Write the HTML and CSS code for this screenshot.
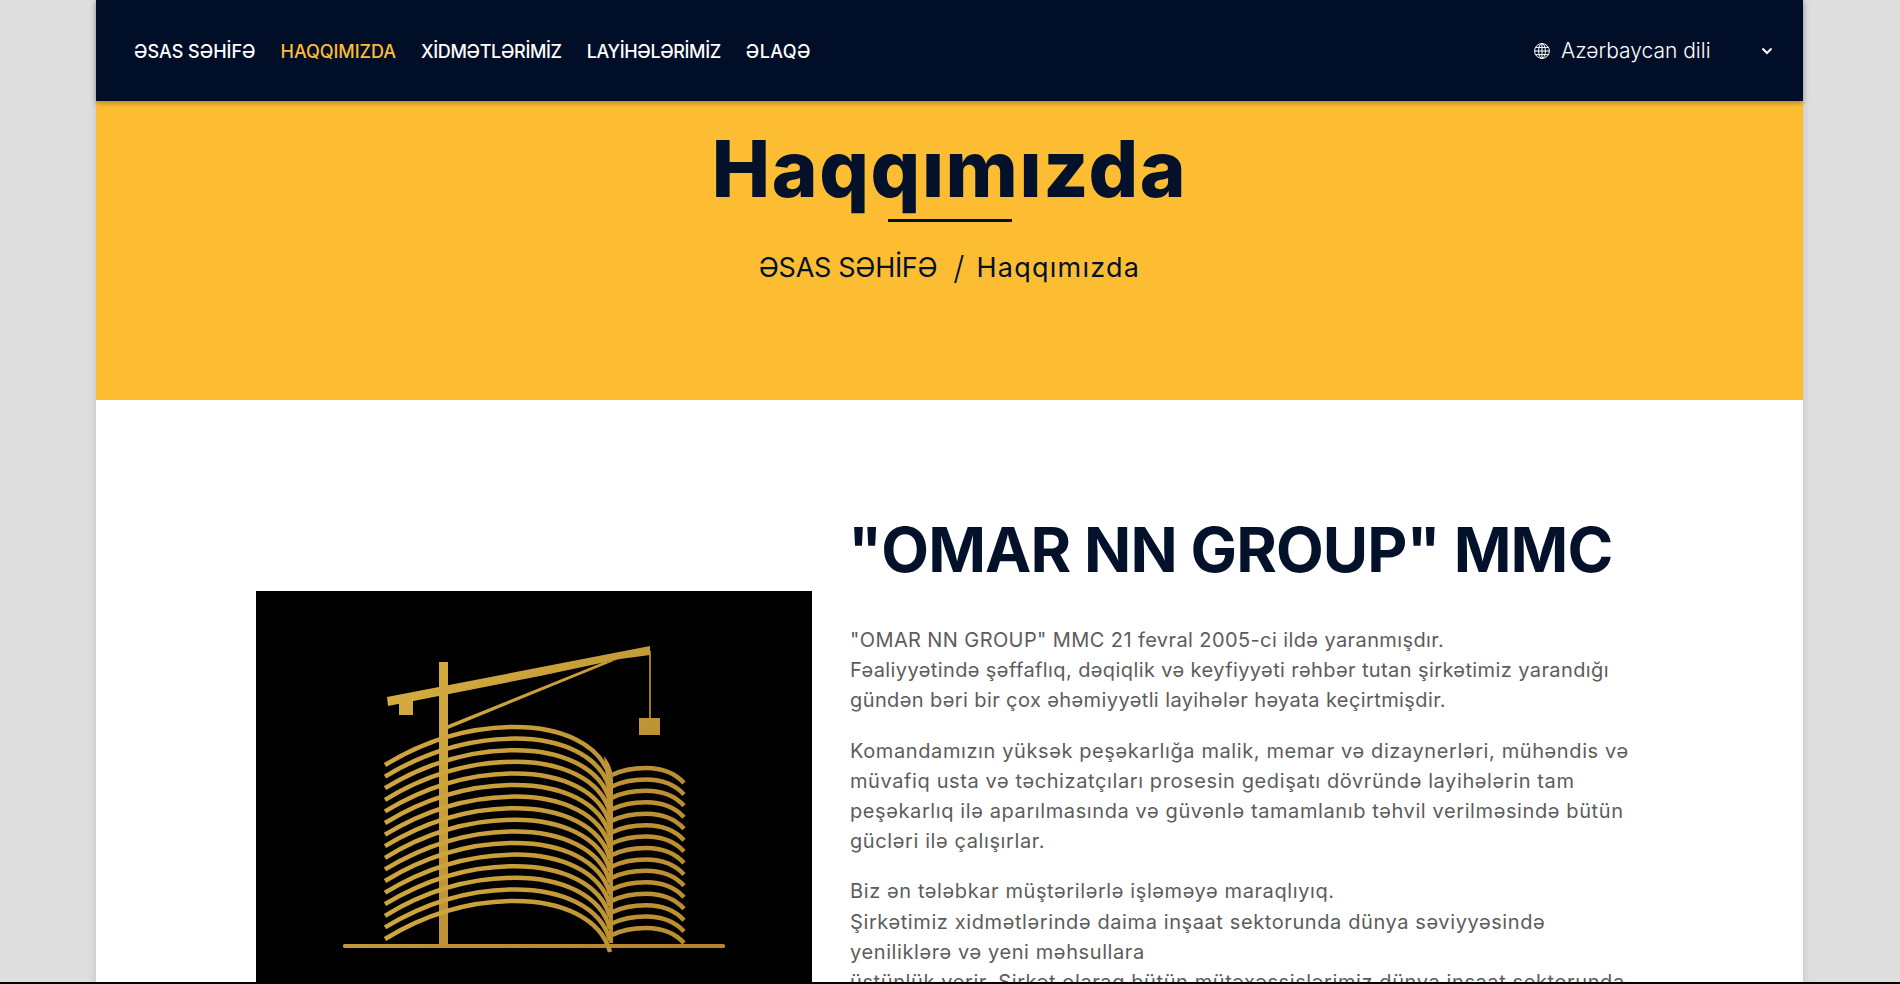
FILE: index.html
```html
<!DOCTYPE html>
<html lang="az">
<head>
<meta charset="utf-8">
<title>Haqqımızda</title>
<link rel="stylesheet" href="styles.css">
</head>
<body>
<div class="page">
  <header class="topbar">
    <nav class="menu">
      <a class="menu-item ls-a" href="#">ƏSAS SƏHİFƏ</a>
      <a class="menu-item ls-b active" href="#">HAQQIMIZDA</a>
      <a class="menu-item ls-c" href="#">XİDMƏTLƏRİMİZ</a>
      <a class="menu-item ls-d" href="#">LAYİHƏLƏRİMİZ</a>
      <a class="menu-item ls-e" href="#">ƏLAQƏ</a>
    </nav>
    <div class="lang">
      <svg class="globe" viewBox="0 0 16 16" fill="none" stroke="currentColor" stroke-width="1">
        <circle cx="8" cy="8" r="7.4"/>
        <ellipse cx="8" cy="8" rx="3.4" ry="7.4"/>
        <path d="M8 .6v14.8M.6 8h14.8M1.700 4.400h12.600M1.700 11.600h12.600"/>
      </svg>
      <span class="lang-name">Azərbaycan dili</span>
      <svg class="chevron" viewBox="0 0 12 8" fill="none" stroke="currentColor" stroke-width="2"><path d="M1.500 1.500 6 6l4.500-4.500"/></svg>
    </div>
  </header>
  <section class="hero">
    <h1 class="hero-title">Haqqımızda</h1>
    <div class="hero-rule"></div>
    <div class="crumbs"><span class="crumb-home">ƏSAS SƏHİFƏ</span><span class="crumb-sep">/</span><span class="crumb-here">Haqqımızda</span></div>
  </section>
  <main class="about">
    <div class="about-media">
      <svg class="logo" viewBox="0 0 556 556">
        <defs>
          <linearGradient id="gold" gradientUnits="userSpaceOnUse" x1="130" y1="50" x2="420" y2="360">
            <stop offset="0" stop-color="#d9b143"/>
            <stop offset=".55" stop-color="#bf9435"/>
            <stop offset="1" stop-color="#b5852b"/>
          </linearGradient>
          <path id="arc-a" d="M129 174C170 149 215 136 259 136C305 136 345 153 354 187"/>
          <path id="arc-b" d="M356 184C368 178 378 177 390 177C405 177 418 181 428 192"/>
        </defs>
        <rect class="logo-bg" width="556" height="556"/>
        <g class="logo-gold">
          <path d="M131 106 394 55v9l-30 4-80 17-152 30z"/>
          <path d="M143 106h14v18h-14z"/>
          <path d="M183 71h9v284h-9z"/>
          <path d="M192 134 348 71l12-2L192 138z"/>
          <path d="M393.200 60h1.600v68h-1.600z"/>
          <path d="M383 127h21v17h-21z"/>
          <rect x="87" y="353" width="382" height="4" rx="1.500"/>
          <path d="M348 165C354 172 357 180 357 190V352h-4C353 300 353 200 348 165z"/>
        </g>
        <g class="logo-lines">
          <use href="#arc-a"/><use href="#arc-a" y="11.600"/><use href="#arc-a" y="23.200"/><use href="#arc-a" y="34.800"/>
          <use href="#arc-a" y="46.400"/><use href="#arc-a" y="58"/><use href="#arc-a" y="69.600"/><use href="#arc-a" y="81.200"/>
          <use href="#arc-a" y="92.800"/><use href="#arc-a" y="104.400"/><use href="#arc-a" y="116"/><use href="#arc-a" y="127.600"/>
          <use href="#arc-a" y="139.200"/><use href="#arc-a" y="150.800"/><use href="#arc-a" y="162.400"/><use href="#arc-a" y="174"/>
          <use href="#arc-b"/><use href="#arc-b" y="11.430"/><use href="#arc-b" y="22.860"/><use href="#arc-b" y="34.290"/>
          <use href="#arc-b" y="45.720"/><use href="#arc-b" y="57.150"/><use href="#arc-b" y="68.580"/><use href="#arc-b" y="80"/>
          <use href="#arc-b" y="91.430"/><use href="#arc-b" y="102.860"/><use href="#arc-b" y="114.290"/><use href="#arc-b" y="125.720"/>
          <use href="#arc-b" y="137.150"/><use href="#arc-b" y="148.580"/><use href="#arc-b" y="160"/>
        </g>
      </svg>
    </div>
    <article class="about-text">
      <h2 class="about-title">"OMAR NN GROUP" MMC</h2>
      <p class="para-tight">"OMAR NN GROUP" MMC 21 fevral 2005-ci ildə yaranmışdır.<br>Fəaliyyətində şəffaflıq, dəqiqlik və keyfiyyəti rəhbər tutan şirkətimiz yarandığı<br>gündən bəri bir çox əhəmiyyətli layihələr həyata keçirtmişdir.</p>
      <p>Komandamızın yüksək peşəkarlığa malik, memar və dizaynerləri, mühəndis və<br>müvafiq usta və təchizatçıları prosesin gedişatı dövründə layihələrin tam<br>peşəkarlıq ilə aparılmasında və güvənlə tamamlanıb təhvil verilməsində bütün<br>gücləri ilə çalışırlar.</p>
      <p>Biz ən tələbkar müştərilərlə işləməyə maraqlıyıq.<br>Şirkətimiz xidmətlərində daima inşaat sektorunda dünya səviyyəsində<br>yeniliklərə və yeni məhsullara<br>üstünlük verir. Şirkət olaraq bütün mütəxəssislərimiz dünya inşaat sektorunda</p>
    </article>
  </main>
</div>
<div class="window-edge"></div>
</body>
</html>
```
FILE: styles.css
```css
* { box-sizing: border-box; }
html, body { height: 100%; overflow: hidden; }
body {
  margin: 0;
  background: #dedede;
  font-family: Inter, "Noto Sans", sans-serif;
}
.page {
  width: 1707px;
  margin: 0 0 0 96px;
  min-height: 984px;
  background: #fff;
  box-shadow: 0 0 8px rgba(0, 0, 0, .12);
}
.topbar {
  position: relative;
  z-index: 2;
  height: 101px;
  padding: 2px 30px 0 38px;
  display: flex;
  align-items: center;
  justify-content: space-between;
  background: #010e28;
  color: #fff;
  box-shadow: 0 2px 5px rgba(0, 0, 0, .3);
}
.menu { display: flex; gap: 25px; }
.menu-item {
  color: #fff;
  text-decoration: none;
  font-size: 18px;
  font-weight: 500;
  white-space: nowrap;
}
.menu-item.active { color: #fdbd33; }
.ls-a { letter-spacing: 0; }
.ls-b { letter-spacing: -.06px; }
.ls-c { letter-spacing: -.34px; }
.ls-d { letter-spacing: -.38px; }
.ls-e { letter-spacing: .38px; }
.lang { display: flex; align-items: center; margin-top: -2px; }
.globe { width: 16px; height: 16px; }
.lang-name { margin-left: 11px; width: 200px; font-size: 21px; font-weight: 300; }
.chevron { width: 12px; height: 8px; }
.hero {
  height: 299px;
  background: #fdbd33;
  display: flex;
  flex-direction: column;
  align-items: center;
  color: #03112a;
  padding-top: 22px;
}
.hero-title {
  margin: 0;
  font-size: 78px;
  line-height: 92px;
  font-weight: 800;
  letter-spacing: 1.600px;
}
.hero-rule { width: 124px; height: 3px; background: #03112a; margin: 4px 0 0 0; }
.crumbs { margin-top: 26px; font-size: 27px; line-height: 40px; display: flex; align-items: center; }
.crumb-home { letter-spacing: -.3px; }
.crumb-sep { margin: 0 12px 0 16px; font-size: 32px; font-weight: 300; }
.crumb-here { letter-spacing: 1.250px; }
.about {
  display: grid;
  grid-template-columns: 556px 1fr;
  gap: 38px;
  padding: 0 0 0 160px;
}
.about-media { padding-top: 191px; }
.logo { display: block; width: 556px; height: 556px; }
.logo-bg { fill: #000; }
.logo-gold { fill: url(#gold); }
.logo-lines { fill: none; stroke: url(#gold); stroke-width: 4.500; }
.about-text { padding-top: 116px; }
.about-title {
  margin: 0 0 41px -2px;
  font-size: 62px;
  line-height: 68px;
  font-weight: 700;
  letter-spacing: -.9px;
  color: #03112a;
  white-space: nowrap;
}
.about-text p {
  margin: 0 0 20px;
  font-size: 20px;
  line-height: 30.200px;
  letter-spacing: .6px;
  color: #5c5c5c;
  white-space: nowrap;
}
.about-text .para-tight { letter-spacing: .4px; }
.window-edge {
  position: fixed;
  left: 0;
  right: 0;
  bottom: 0;
  height: 2px;
  background: #000;
}
```
